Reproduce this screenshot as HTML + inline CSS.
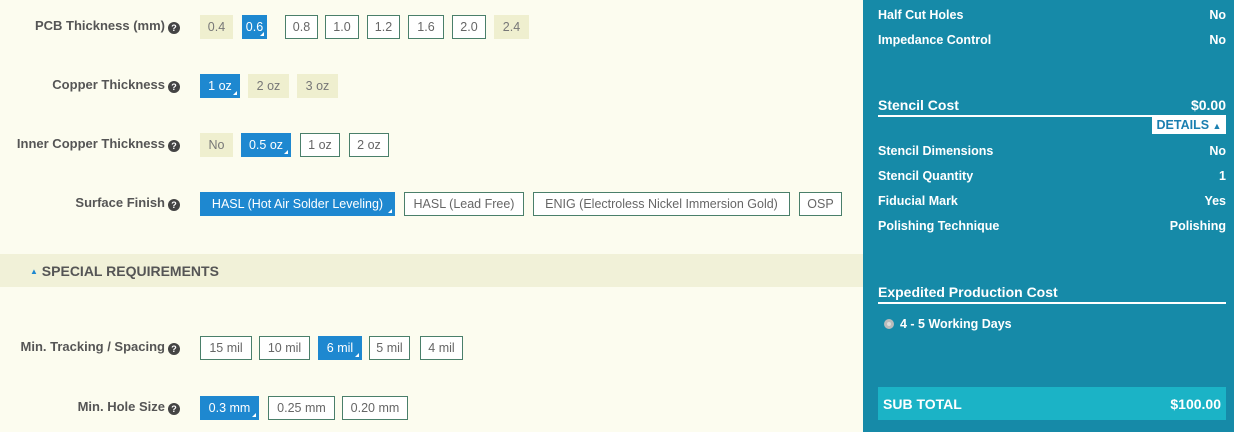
<!DOCTYPE html>
<html><head><meta charset="utf-8"><style>
*{margin:0;padding:0;box-sizing:border-box}
body{width:1234px;height:432px;overflow:hidden;background:#fcfcef;font-family:"Liberation Sans",Arial,sans-serif;position:relative}
.l{position:absolute;right:1054px;font-size:13px;font-weight:bold;color:#555;white-space:nowrap;line-height:16px}
.q{display:inline-block;width:12px;height:12px;border-radius:50%;background:#444;color:#fff;font-size:9px;text-align:center;line-height:12px;vertical-align:-1px;margin-left:3px}
.b{position:absolute;height:24px;border:1px solid #4a7f6a;background:#fff;color:#666;font-size:12.5px;text-align:center;line-height:22px;white-space:nowrap}
.b.a{background:#1e88d0;border-color:#1e88d0;color:#fff}
.b.a::after{content:"";position:absolute;right:2px;bottom:2px;border-left:4px solid transparent;border-bottom:4px solid #fff}
.b.d{background:#efefcf;border-color:#efefcf;color:#777}
.bar{position:absolute;left:0;top:254px;width:863px;height:33px;background:#f1f1d8}
.bar span{position:absolute;left:30px;top:9px;font-size:14px;font-weight:bold;color:#555}
.side{position:absolute;left:863px;top:0;width:371px;height:432px;background:#168aa8;color:#fff;font-size:12.5px;font-weight:bold}
.r{position:absolute;left:15px;right:8px;display:flex;justify-content:space-between;line-height:16px}
.h{position:absolute;left:15px;right:8px;font-size:14px;display:flex;justify-content:space-between;border-bottom:2px solid #fff;padding-bottom:2px}
</style></head><body>
<div class="l" style="top:18px">PCB Thickness (mm)<span class="q">?</span></div>
<div class="b d" style="left:200px;top:15px;width:33px">0.4</div>
<div class="b a" style="left:242px;top:15px;width:25px">0.6</div>
<div class="b" style="left:285px;top:15px;width:33px">0.8</div>
<div class="b" style="left:325px;top:15px;width:34px">1.0</div>
<div class="b" style="left:367px;top:15px;width:33px">1.2</div>
<div class="b" style="left:408px;top:15px;width:36px">1.6</div>
<div class="b" style="left:452px;top:15px;width:34px">2.0</div>
<div class="b d" style="left:494px;top:15px;width:35px">2.4</div>

<div class="l" style="top:77px">Copper Thickness<span class="q">?</span></div>
<div class="b a" style="left:200px;top:74px;width:40px">1 oz</div>
<div class="b d" style="left:248px;top:74px;width:41px">2 oz</div>
<div class="b d" style="left:297px;top:74px;width:41px">3 oz</div>

<div class="l" style="top:136px">Inner Copper Thickness<span class="q">?</span></div>
<div class="b d" style="left:200px;top:133px;width:33px">No</div>
<div class="b a" style="left:241px;top:133px;width:50px">0.5 oz</div>
<div class="b" style="left:300px;top:133px;width:40px">1 oz</div>
<div class="b" style="left:349px;top:133px;width:40px">2 oz</div>

<div class="l" style="top:195px">Surface Finish<span class="q">?</span></div>
<div class="b a" style="left:200px;top:192px;width:195px">HASL (Hot Air Solder Leveling)</div>
<div class="b" style="left:404px;top:192px;width:120px">HASL (Lead Free)</div>
<div class="b" style="left:533px;top:192px;width:257px">ENIG (Electroless Nickel Immersion Gold)</div>
<div class="b" style="left:799px;top:192px;width:43px">OSP</div>

<div class="bar"><span><small style="color:#1e88d0;font-size:8px;vertical-align:2px">▲</small> SPECIAL REQUIREMENTS</span></div>

<div class="l" style="top:339px">Min. Tracking / Spacing<span class="q">?</span></div>
<div class="b" style="left:200px;top:336px;width:52px">15 mil</div>
<div class="b" style="left:259px;top:336px;width:51px">10 mil</div>
<div class="b a" style="left:318px;top:336px;width:44px">6 mil</div>
<div class="b" style="left:369px;top:336px;width:41px">5 mil</div>
<div class="b" style="left:420px;top:336px;width:43px">4 mil</div>

<div class="l" style="top:399px">Min. Hole Size<span class="q">?</span></div>
<div class="b a" style="left:200px;top:396px;width:59px">0.3 mm</div>
<div class="b" style="left:268px;top:396px;width:67px">0.25 mm</div>
<div class="b" style="left:342px;top:396px;width:66px">0.20 mm</div>

<div class="side">
<div class="r" style="top:7px"><span>Half Cut Holes</span><span>No</span></div>
<div class="r" style="top:32px"><span>Impedance Control</span><span>No</span></div>
<div class="h" style="top:97px"><span>Stencil Cost</span><span>$0.00</span></div>
<div style="position:absolute;left:289px;top:117px;width:74px;height:17px;background:#fff;color:#1a7fb0;font-size:12.5px;line-height:17px;text-align:center">DETAILS <small style="font-size:9px">▲</small></div>
<div class="r" style="top:143px"><span>Stencil Dimensions</span><span>No</span></div>
<div class="r" style="top:168px"><span>Stencil Quantity</span><span>1</span></div>
<div class="r" style="top:193px"><span>Fiducial Mark</span><span>Yes</span></div>
<div class="r" style="top:218px"><span>Polishing Technique</span><span>Polishing</span></div>
<div class="h" style="top:284px"><span>Expedited Production Cost</span><span></span></div>
<div style="position:absolute;left:21px;top:319px;width:10px;height:10px;border-radius:50%;background:#ddd;border:3px solid #bbb"></div>
<div class="r" style="top:316px;left:37px"><span>4 - 5 Working Days</span></div>
<div style="position:absolute;left:15px;top:387px;width:348px;height:33px;background:#1bb3c6;font-size:14px;display:flex;justify-content:space-between;align-items:center;padding:0 5px"><span>SUB TOTAL</span><span>$100.00</span></div>
</div>
</body></html>
